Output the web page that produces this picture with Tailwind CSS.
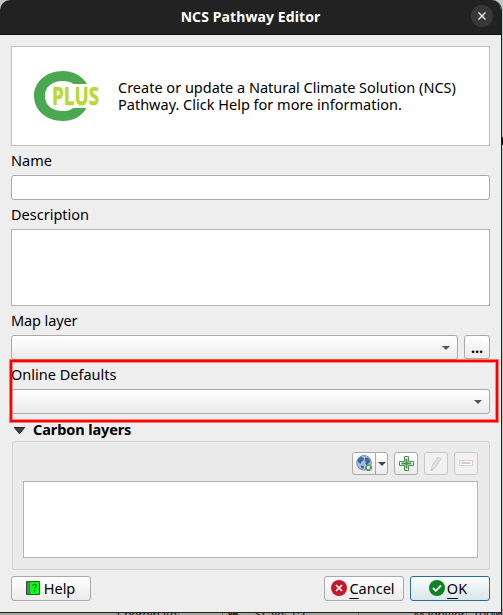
<!DOCTYPE html>
<html lang="en">
<head>
<meta charset="utf-8">
<title>NCS Pathway Editor</title>
<script src="https://cdn.jsdelivr.net/npm/@tailwindcss/browser@4"></script>
</head>
<body class="relative h-[615px] w-[503px] overflow-hidden bg-[#c6c9c3] font-['Noto_Sans','Open_Sans',sans-serif] text-[14.5px] leading-[17px] text-black">
<div class="absolute bottom-0 left-0 h-[6px] w-[503px] overflow-hidden bg-[#a5a5a2] text-[12px] leading-[12px] text-[#151515]">
  <div class="flex h-[12px] w-[503px] pl-[117px]"><span class="w-[64px] border-r border-[#777] tracking-[-0.3px]">Coordinate</span><span class="ml-[43px] w-[24px] border-l border-[#777] pl-[5px] font-bold">%</span><span class="ml-[10px] w-[32px] border-r border-[#777]">Scale</span><span class="w-[76px] border-r border-[#777] pl-[4px]">1:1</span><span class="ml-[54px] w-[56px] border-r border-[#777] tracking-[-0.3px]">Magnifier</span><span class="pl-[5px]">100%</span></div>
</div>
<div class="absolute right-0 top-[137px] h-[8px] w-[2px] rounded-l bg-black"></div>
<main class="relative flex h-[613px] w-[502px] flex-col overflow-hidden rounded-t-[10px] border-b border-r border-[#1c1f1b] bg-[#eeeeee]">
  <header class="relative flex h-[35px] shrink-0 items-center justify-center border-b border-[#111] bg-[#222222] pb-[2px] text-[14px] font-bold text-white">
    <h1 class="tracking-[0.1px]">NCS Pathway Editor</h1>
    <button class="absolute right-[8px] top-[5px] flex size-[22px] items-center justify-center rounded-full bg-[#383838]">
      <svg class="size-[8px]" viewBox="0 0 8 8" fill="none" stroke="#fff" stroke-width="1.3"><path d="M.5.5 7.5 7.5M7.5.5.5 7.5"/></svg>
    </button>
  </header>
  <div class="flex flex-col pl-[11px] pr-[11px] pt-[11px]">
    <section class="flex h-[100px] items-center border border-[#c0c0c0] bg-white pl-[22px]">
      <svg class="h-[52px] w-[67px] shrink-0" viewBox="0 0 67 52">
        <path d="M53 14C47 5 39 1 29 1 12 1 0 12 0 26s12 25 29 25c10 0 18-4 23.500-13H39.500C36 40.500 33 41 29 41 18 41 11 35 11 26s7-15 18-15c4 0 7 .8 10.500 3Z" fill="#4aa850"/>
        <text x="18" y="34.500" textLength="47" lengthAdjust="spacingAndGlyphs" font-family="Open Sans" font-weight="700" font-size="25" fill="#b9d935" stroke="#b9d935" stroke-width=".6">PLUS</text>
      </svg>
      <p class="ml-[17px] flex flex-col whitespace-nowrap"><span>Create or update a Natural Climate Solution (NCS)</span><span>Pathway. Click Help for more information.</span></p>
    </section>
    <label class="mt-[6px] h-[17px]">Name</label>
    <input class="mt-[6px] h-[25px] rounded-[3px] border border-[#a9a9a9] bg-white">
    <label class="mt-[6px] h-[17px]">Description</label>
    <textarea class="mt-[6px] h-[77px] resize-none border border-[#b4b4b4] bg-white"></textarea>
    <label class="mt-[6px] h-[17px] tracking-[-0.1px]">Map layer</label>
    <div class="mt-[6px] flex gap-[6px]">
      <div class="flex h-[25px] w-[447px] items-center justify-end rounded-[3px] border border-[#a9a9a9] bg-linear-to-b from-white to-[#ebebeb] pr-[7px]"><svg class="h-[4px] w-[8px]" viewBox="0 0 8 4"><path d="M0 0H8L4 4Z" fill="#555"/></svg></div>
      <button class="flex h-[24px] w-[26px] items-center justify-center rounded-[3px] border border-[#a9a9a9] bg-linear-to-b from-white to-[#ebebeb] font-bold">...</button>
    </div>
    <label class="mt-[6px] h-[17px]">Online Defaults</label>
    <div class="mt-[6px] flex h-[25px] items-center justify-end rounded-[3px] border border-[#a9a9a9] bg-linear-to-b from-white to-[#ebebeb] pr-[7px]"><svg class="h-[4px] w-[8px]" viewBox="0 0 8 4"><path d="M0 0H8L4 4Z" fill="#555"/></svg></div>
    <div class="mt-[7px] flex h-[17px] items-center gap-[8px] pl-[3px] font-bold"><svg class="mt-[2px] h-[7px] w-[11px]" viewBox="0 0 11 7"><path d="M.3.5H10.700L5.500 6.700Z" fill="#444" stroke="#222"/></svg><span class="tracking-[-0.1px]">Carbon layers</span></div>
    <section class="ml-px mt-[3px] flex h-[129px] flex-col rounded-[2px] border border-[#d4d4d4] bg-[#eaeaea] px-[10px] pt-[10px]">
      <div class="flex h-[23px] justify-end gap-[6px] pr-px">
        <div class="flex w-[36px] rounded-[3px] border border-[#ababab] bg-linear-to-b from-white to-[#ececec]">
          <span class="flex w-[23px] items-center justify-center border-r border-[#ababab]">
            <svg class="size-[17px]" viewBox="0 0 17 17"><circle cx="8" cy="7.800" r="7.300" fill="#a3bfe0" stroke="#7c8fa9"/><path d="M2 4 5 2l3 1-1 3-2 1v2L3 8 1.500 6ZM9.500 2.500l3 .5 2 4-2 1-1 3-2-2V6l-1-1ZM5 10.500l3 .5-1 3-2-1Z" fill="#41669a"/><path d="M10.500 9.500h4V11H16v3.500h-1.500V16h-4v-1.500H9V11h1.500Z" fill="#5f9a5a"/><path d="M11.200 11.200h2.600v2.600h-2.600Z" fill="#fff"/></svg>
          </span>
          <span class="flex flex-1 items-center justify-center"><svg class="h-[4px] w-[8px]" viewBox="0 0 8 4"><path d="M0 0H8L4 4Z" fill="#444"/></svg></span>
        </div>
        <button class="flex w-[24px] items-center justify-center rounded-[3px] border border-[#ababab] bg-linear-to-b from-white to-[#ececec]"><svg class="size-[15px]" viewBox="0 0 15 15"><path d="M5.500.5h4v5h5v4h-5v5h-4v-5h-5v-4h5Z" fill="#fff" stroke="#479052"/><path d="M7.500 2.500v10M2.500 7.500h10" stroke="#479052" stroke-width="2"/></svg></button>
        <button class="flex w-[24px] items-center justify-center rounded-[3px] border border-[#c9c9c9] bg-[#f1f1f1]"><svg class="size-[16px]" viewBox="0 0 16 16"><path d="m3 15 1-5L10 1l3 2-6 9Z" fill="#dadad5" stroke="#c9c9c4" stroke-width=".7"/><path d="m5 11 6-9" stroke="#ecece5"/><path d="m3 15 .5-2 1.500 1Z" fill="#bbb"/></svg></button>
        <button class="flex w-[24px] items-center justify-center rounded-[3px] border border-[#c9c9c9] bg-[#f1f1f1]"><svg class="-mt-[2px] h-[6px] w-[14px]" viewBox="0 0 14 6"><path d="M.5.5h13v5H.5Z" fill="#fff" stroke="#dfc9c9"/><path d="M2.500 3h9" stroke="#dfc9c9" stroke-width="2"/></svg></button>
      </div>
      <div class="mr-px mt-[6px] h-[77px] border border-[#b4b4b4] bg-white"></div>
    </section>
    <footer class="mt-[6px] flex h-[25px] text-[14.500px]">
      <button class="flex w-[80px] items-center justify-center gap-[4px] rounded-[3px] border border-[#a9a9a9] bg-linear-to-b from-white to-[#ebebeb] pr-px"><svg class="-mt-[2px] size-[14px]" viewBox="0 0 14 14"><path d="M.5.500h13v13H.5Z" fill="#00ff12" stroke="#245b27"/><path d="M1 1h2.500v12H1Z" fill="#777" stroke="#444" stroke-width=".5"/><path d="M6.700 4.500c.5-1.500 3.500-1.500 3.500.3 0 1.300-1.700 1.500-1.700 3M8.500 9v1.500" fill="none" stroke="#075b12" stroke-width="1.200"/></svg><span>Help</span></button>
      <button class="ml-auto flex w-[80px] items-center justify-center gap-[2px] rounded-[3px] border border-[#a9a9a9] bg-linear-to-b from-white to-[#ebebeb] pr-[2px]"><svg class="-mt-px size-[16px]" viewBox="0 0 16 16"><circle cx="8" cy="8" r="8" fill="#c7162b"/><path d="m5 5 6 6m0-6-6 6" stroke="#fff" stroke-width="1.700"/></svg><span><span class="underline underline-offset-[4px]">C</span>ancel</span></button>
      <button class="ml-[6px] flex w-[80px] items-center justify-center gap-[2px] rounded-[3px] border border-[#286f9e] bg-linear-to-b from-[#fbfdfe] to-[#dce5eb] pr-[4px]"><svg class="-mt-px size-[16px]" viewBox="0 0 16 16"><circle cx="8" cy="8" r="8" fill="#0e8420"/><path d="m4 8 2.800 2.800L12 5.500" fill="none" stroke="#fff" stroke-width="1.800"/></svg><span><span class="underline underline-offset-[4px]">O</span>K</span></button>
    </footer>
  </div>
</main>
<div class="absolute left-[9px] top-[359px] h-[64px] w-[490px] border border-[#ff0000]/50"><div class="h-full border-2 border-[#ff0000]"><div class="h-full border border-[#ff0000]/40"></div></div></div>
</body>
</html>
